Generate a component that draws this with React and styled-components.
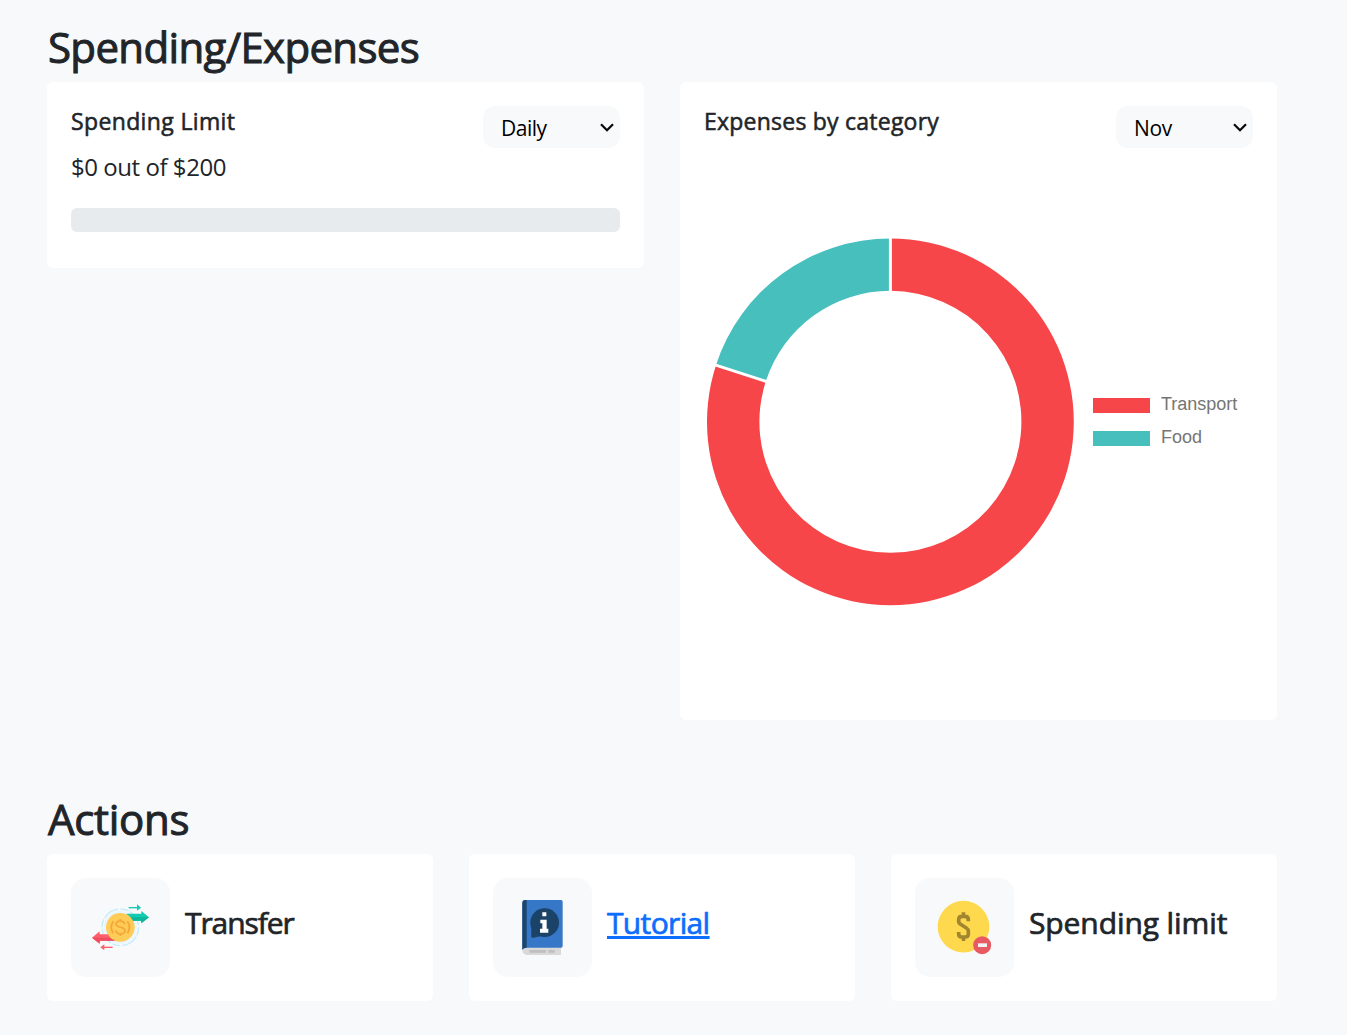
import React from "react";
import styled, { createGlobalStyle } from "styled-components";

const Global = createGlobalStyle`
  *, *::before, *::after { box-sizing: border-box; }
  body {
    margin: 0;
    background: #f8f9fb;
    color: #212529;
    font-family: "Open Sans", "Noto Sans", sans-serif;
  }
  h1, h2, h3, p { margin: 0; }
  h1, h2, h3 {
    font-weight: 400;
    -webkit-text-stroke: 0.024em currentColor;
  }
`;

const Page = styled.main`
  width: 1347px;
  height: 1035px;
  padding: 22px 70px 0 47px;
  overflow: hidden;
`;

const Heading = styled.h1`
  height: 60px;
  padding-left: 1px;
  line-height: 49px;
  font-size: 42px;
  white-space: nowrap;
  letter-spacing: ${(p) => p.$track || 0}px;
`;

const Grid = styled.div`
  display: grid;
  grid-template-columns: repeat(${(p) => p.$columns}, 1fr);
  gap: 36px;
  align-items: start;
`;

const Overview = styled.section`
  height: 772px;
`;

const Card = styled.section`
  height: ${(p) => p.$height}px;
  padding: 24px;
  border-radius: 6px;
  background: #fff;
`;

const CardHeader = styled.header`
  display: flex;
  justify-content: space-between;
  height: 42px;
`;

const CardTitle = styled.h2`
  font-size: 23px;
  line-height: 30px;
  white-space: nowrap;
  letter-spacing: ${(p) => p.$track || 0}px;
`;

const SelectBox = styled.label`
  display: grid;
  width: 137px;
  height: 42px;
  border-radius: 12px;
  background: #f8f9fb;
  > * { grid-area: 1 / 1; }
`;

const Select = styled.select`
  appearance: none;
  width: 100%;
  padding: 2px 36px 0 18px;
  border: 0;
  background: transparent;
  color: #000;
  font: 400 21px "Open Sans", "Noto Sans", sans-serif;
  letter-spacing: ${(p) => p.$track || 0}px;
`;

const Chevron = styled.svg`
  width: 14px;
  height: 9px;
  align-self: center;
  justify-self: end;
  margin-right: 6px;
  pointer-events: none;
`;

const Amount = styled.p`
  height: 60px;
  padding-top: 2px;
  font-size: 24px;
  line-height: 34px;
  white-space: nowrap;
  letter-spacing: ${(p) => p.$track || 0}px;
`;

const Progress = styled.div`
  height: 24px;
  border-radius: 6px;
  background: #e8ebee;
`;

const Chart = styled.div`
  display: flex;
  align-items: flex-start;
  padding: 90px 0 0 3px;
`;

const Donut = styled.svg`
  flex: none;
  width: 368px;
  height: 368px;
`;

const Legend = styled.ul`
  display: grid;
  gap: 12px;
  margin: 156px 0 0 18px;
  padding: 0;
  list-style: none;
`;

const LegendItem = styled.li`
  display: flex;
  align-items: center;
  gap: 11px;
  height: 21px;
  color: #757575;
  font: 18px/21px "Liberation Sans", Arial, sans-serif;
`;

const Swatch = styled.span`
  width: 57px;
  height: 15px;
  margin-top: 1px;
  background: ${(p) => p.$color};
`;

const ActionCard = styled(Card)`
  display: flex;
  gap: 15px;
`;

const IconTile = styled.div`
  flex: none;
  width: 99px;
  height: 99px;
  border-radius: 15px;
  background: #f8f9fb;
  svg { display: block; width: 99px; height: 99px; }
`;

const ActionLabel = styled.h3`
  padding-top: 24px;
  font-size: 30px;
  line-height: 42px;
  white-space: nowrap;
  letter-spacing: ${(p) => p.$track || 0}px;
`;

const Link = styled.a`
  color: #0d6efd;
  text-decoration: underline;
  text-decoration-thickness: 3px;
  text-underline-offset: 2px;
  text-decoration-skip-ink: none;
`;

const expenses = [
  { label: "Transport", share: 0.8, color: "#f7464a" },
  { label: "Food", share: 0.2, color: "#46bfbd" },
];

function point(turn, radius) {
  const a = (turn - 0.25) * Math.PI * 2;
  return `${183.4 + Math.cos(a) * radius} ${183.8 + Math.sin(a) * radius}`;
}

function DonutChart() {
  let turn = 0;
  const slices = expenses.map((e) => {
    const from = turn;
    turn += e.share;
    const large = e.share > 0.5 ? 1 : 0;
    return {
      ...e,
      from,
      d: `M${point(from, 183.4)} A183.4 183.4 0 ${large} 1 ${point(turn, 183.4)} L${point(turn, 131)} A131 131 0 ${large} 0 ${point(from, 131)}Z`,
    };
  });
  return (
    <Donut viewBox="0 0 368 368">
      {slices.map((s) => <path key={s.label} d={s.d} fill={s.color} />)}
      {slices.map((s) => (
        <path key={s.label} d={`M${point(s.from, 129)} L${point(s.from, 186)}`} stroke="#fff" strokeWidth="3" />
      ))}
    </Donut>
  );
}

function Picker({ value, options, track }) {
  return (
    <SelectBox>
      <Select defaultValue={value} $track={track} aria-label={value}>
        {options.map((o) => <option key={o}>{o}</option>)}
      </Select>
      <Chevron viewBox="0 0 14 9">
        <path d="M1 1.2 7 7.2 13 1.2" fill="none" stroke="#0b0b0b" strokeWidth="2.3" />
      </Chevron>
    </SelectBox>
  );
}

function TransferIcon() {
  return (
    <svg viewBox="33 24 297 297">
      <circle cx="181" cy="172" r="50" fill="#e9f6fd" />
      <circle cx="181" cy="172" r="55" fill="none" stroke="#c6ecfb" strokeWidth="4" strokeDasharray="25 4 50 7" />
      <path d="M200 131H244V123L267 142L244 160V152H206Z" fill="#12cbb0" />
      <path d="M206 142H267L244 160V152H206Z" fill="#0cb59b" />
      <path d="M206 113H234" stroke="#12cbb0" strokeWidth="4" />
      <path d="M231 103L243 113L231 122Z" fill="#12cbb0" />
      <path d="M166 193H119V184L96 203L119 221V212H166Z" fill="#ff5e6c" />
      <path d="M166 203H96L119 221V212H166Z" fill="#f04c60" />
      <path d="M158 232H130" stroke="#ff5e6c" strokeWidth="4" />
      <path d="M133 223L121 232L133 241Z" fill="#ff5e6c" />
      <circle cx="181" cy="172" r="43" fill="#ffcc57" />
      <g fill="none" stroke="#f5a838" strokeWidth="5.5">
        <path d="M160 154Q147 172 160 190M202 154Q215 172 202 190" />
        <path d="M194 163C193 150 168 150 168 162C168 174 195 169 195 182C195 195 168 195 168 181M181 147V154M181 190V198" />
      </g>
    </svg>
  );
}

function TutorialIcon() {
  return (
    <svg viewBox="39 24 297 297">
      <path d="M127 232H243V255H141Q127 254 127 238Z" fill="#d9d9d9" />
      <path d="M136 90H243Q248 90 248 95V228Q248 233 243 233H137Q130 233 127 239V99Q127 90 136 90Z" fill="#3777c8" />
      <path d="M140 90H136Q127 90 127 99V239Q130 233 140 233Z" fill="#1c456b" />
      <path d="M148 244H198M205 244H224" stroke="#bfbfbf" strokeWidth="8" />
      <circle cx="194" cy="158" r="43" fill="#1b4267" />
      <path d="M154 174V200Q155 204 160 203L184 198Z" fill="#1b4267" />
      <path d="M187 127H199V139H187ZM181 149H200V176H205V188H180V176H187V160H181Z" fill="#fff" />
    </svg>
  );
}

function LimitIcon() {
  return (
    <svg viewBox="45 24 297 297">
      <circle cx="190.500" cy="170" r="77.500" fill="#ffd94d" />
      <path d="M205 154V149Q205 139 195 139H186Q176 139 176 149V154Q176 160 182 163L199 174Q205 178 205 184V191Q205 201 195 201H186Q176 201 176 191V186M190.500 127V139M190.500 201V213" fill="none" stroke="#a1862f" strokeWidth="11" />
      <circle cx="246.500" cy="225.500" r="27" fill="#e85a62" />
      <rect x="234" y="220" width="27" height="11" fill="#f1f2f3" />
    </svg>
  );
}

export default function App() {
  return (
    <>
      <Global />
      <Page>
        <Overview>
          <Heading $track={-0.66}>Spending/Expenses</Heading>
          <Grid $columns={2}>
            <Card $height={186}>
              <CardHeader>
                <CardTitle $track={0.36}>Spending Limit</CardTitle>
                <Picker value="Daily" options={["Daily", "Weekly", "Monthly"]} track={-0.5} />
              </CardHeader>
              <Amount $track={-0.45}>$0 out of $200</Amount>
              <Progress />
            </Card>
            <Card $height={638}>
              <CardHeader>
                <CardTitle $track={0.23}>Expenses by category</CardTitle>
                <Picker value="Nov" options={["Oct", "Nov", "Dec"]} track={-0.4} />
              </CardHeader>
              <Chart>
                <DonutChart />
                <Legend>
                  {expenses.map((e) => (
                    <LegendItem key={e.label}><Swatch $color={e.color} />{e.label}</LegendItem>
                  ))}
                </Legend>
              </Chart>
            </Card>
          </Grid>
        </Overview>
        <Heading $track={-0.3}>Actions</Heading>
        <Grid $columns={3}>
          <ActionCard $height={147}>
            <IconTile><TransferIcon /></IconTile>
            <ActionLabel $track={-1.1}>Transfer</ActionLabel>
          </ActionCard>
          <ActionCard $height={147}>
            <IconTile><TutorialIcon /></IconTile>
            <ActionLabel $track={-0.65}><Link href="#">Tutorial</Link></ActionLabel>
          </ActionCard>
          <ActionCard $height={147}>
            <IconTile><LimitIcon /></IconTile>
            <ActionLabel $track={-0.1}>Spending limit</ActionLabel>
          </ActionCard>
        </Grid>
      </Page>
    </>
  );
}
